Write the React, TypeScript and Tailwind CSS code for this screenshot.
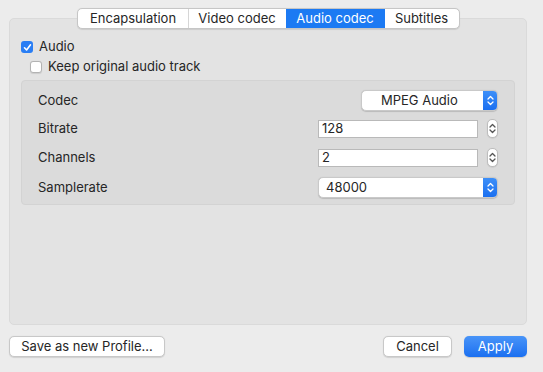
import React from 'react';

const font = { fontFamily: 'Inter, "Liberation Sans", sans-serif' };

const UpDown = ({ color = 'white' }: { color?: string }) => (
  <svg width="7" height="11" viewBox="0 0 7 11" fill="none">
    <polyline points="1,4 3.5,1.5 6,4" stroke={color} strokeWidth="1.3" strokeLinecap="round" strokeLinejoin="round" />
    <polyline points="1,7 3.5,9.5 6,7" stroke={color} strokeWidth="1.3" strokeLinecap="round" strokeLinejoin="round" />
  </svg>
);

const Popup = ({ value, width, center }: { value: string; width: string; center?: boolean }) => (
  <div
    className={`${width} h-[21px] flex items-stretch bg-white rounded-[5px] border border-[#c9c9c9] shadow-[0_0.5px_1px_rgba(0,0,0,0.15)] overflow-hidden`}
  >
    <div className={`flex-1 flex items-center text-[13px] text-[#262626] ${center ? 'pl-[19px]' : 'pl-[7px]'}`}>{value}</div>
    <div className="w-[14px] flex items-center justify-center bg-gradient-to-b from-[#3d8ff8] to-[#1a6ff0]">
      <UpDown />
    </div>
  </div>
);

const Stepper = () => (
  <div className="w-[11px] h-[19px] flex items-center justify-center bg-white rounded-[5px] border border-[#bdbdbd] shadow-[0_0.5px_1px_rgba(0,0,0,0.12)]">
    <UpDown color="#555" />
  </div>
);

const TextField = ({ value }: { value: string }) => (
  <div className="w-[160px] h-[18px] flex items-center bg-white border border-[#b9b9b9] pl-[3px] text-[13px] text-[#262626]">
    {value}
  </div>
);

const Check = ({ checked }: { checked: boolean }) =>
  checked ? (
    <div className="w-[12px] h-[12px] rounded-[3px] bg-[#2a7ef4] flex items-center justify-center">
      <svg width="9" height="9" viewBox="0 0 9 9" fill="none">
        <polyline points="1.5,4.8 3.6,7 7.5,1.8" stroke="white" strokeWidth="1.6" strokeLinecap="round" strokeLinejoin="round" />
      </svg>
    </div>
  ) : (
    <div className="w-[12px] h-[12px] rounded-[3px] bg-white border border-[#b3b3b3] shadow-[0_0.5px_1px_rgba(0,0,0,0.1)]" />
  );

const tabs = [
  { label: 'Encapsulation', w: 'w-[109px]' },
  { label: 'Video codec', w: 'w-[98px]' },
  { label: 'Audio codec', w: 'w-[99px]', active: true },
  { label: 'Subtitles', w: 'w-[74px]' },
];

const App = () => {
  return (
    <div className="w-[543px] h-[372px] bg-[#ececec] text-[13px] text-[#262626] overflow-hidden" style={font}>
      <div className="pt-[8px] ml-[9px] w-[518px]">
        {/* Tabs */}
        <div className="relative z-10 flex justify-center">
          <div className="flex h-[21px] rounded-[5px] border border-[#c6c6c6] bg-white overflow-hidden shadow-[0_0.5px_1px_rgba(0,0,0,0.1)] pl-[1px]">
            {tabs.map((t, i) => (
              <div
                key={t.label}
                className={`${t.w} flex items-center justify-center ${
                  t.active ? 'bg-[#1c7af3] text-white' : 'text-[#262626]'
                } ${i > 0 && !t.active && !tabs[i - 1].active ? 'border-l border-[#d6d6d6]' : ''}`}
              >
                {t.label}
              </div>
            ))}
          </div>
        </div>

        {/* Tab box */}
        <div className="-mt-[11px] h-[307px] rounded-[5px] bg-[#e3e3e3] border border-[#dadada] pt-[22px] px-[11px]">
          <div className="flex items-center gap-[6px] h-[12px]">
            <Check checked />
            <span>Audio</span>
          </div>
          <div className="flex items-center gap-[6px] h-[12px] mt-[8px] ml-[9px]">
            <Check checked={false} />
            <span>Keep original audio track</span>
          </div>

          {/* Group */}
          <div className="mt-[7px] h-[125px] rounded-[4px] bg-[#dbdbdb] border border-[#d3d3d3] pt-[9px] pl-[16px] pr-[16px]">
            <div className="flex items-center justify-between h-[21px]">
              <span>Codec</span>
              <Popup value="MPEG Audio" width="w-[137px]" center />
            </div>
            <div className="flex items-center justify-between h-[19px] mt-[8px]">
              <span>Bitrate</span>
              <div className="flex items-center gap-[9px]">
                <TextField value="128" />
                <Stepper />
              </div>
            </div>
            <div className="flex items-center justify-between h-[19px] mt-[10px]">
              <span>Channels</span>
              <div className="flex items-center gap-[9px]">
                <TextField value="2" />
                <Stepper />
              </div>
            </div>
            <div className="flex items-center justify-between h-[21px] mt-[10px]">
              <span>Samplerate</span>
              <Popup value="48000" width="w-[180px]" />
            </div>
          </div>
        </div>

        {/* Bottom buttons */}
        <div className="flex items-center mt-[11px]">
          <button className="w-[156px] h-[21px] rounded-[5px] bg-white border border-[#c8c8c8] shadow-[0_0.5px_1px_rgba(0,0,0,0.12)] text-[13px] text-[#262626]">
            Save as new Profile...
          </button>
          <div className="flex-1" />
          <button className="w-[69px] h-[21px] rounded-[5px] bg-white border border-[#c8c8c8] shadow-[0_0.5px_1px_rgba(0,0,0,0.12)] text-[13px] text-[#262626]">
            Cancel
          </button>
          <button className="ml-[12px] w-[63px] h-[21px] rounded-[5px] bg-gradient-to-b from-[#4894f8] to-[#1a6ff0] text-[13px] text-white shadow-[0_0.5px_1px_rgba(0,0,0,0.15)]">
            Apply
          </button>
        </div>
      </div>
    </div>
  );
};

export default App;
